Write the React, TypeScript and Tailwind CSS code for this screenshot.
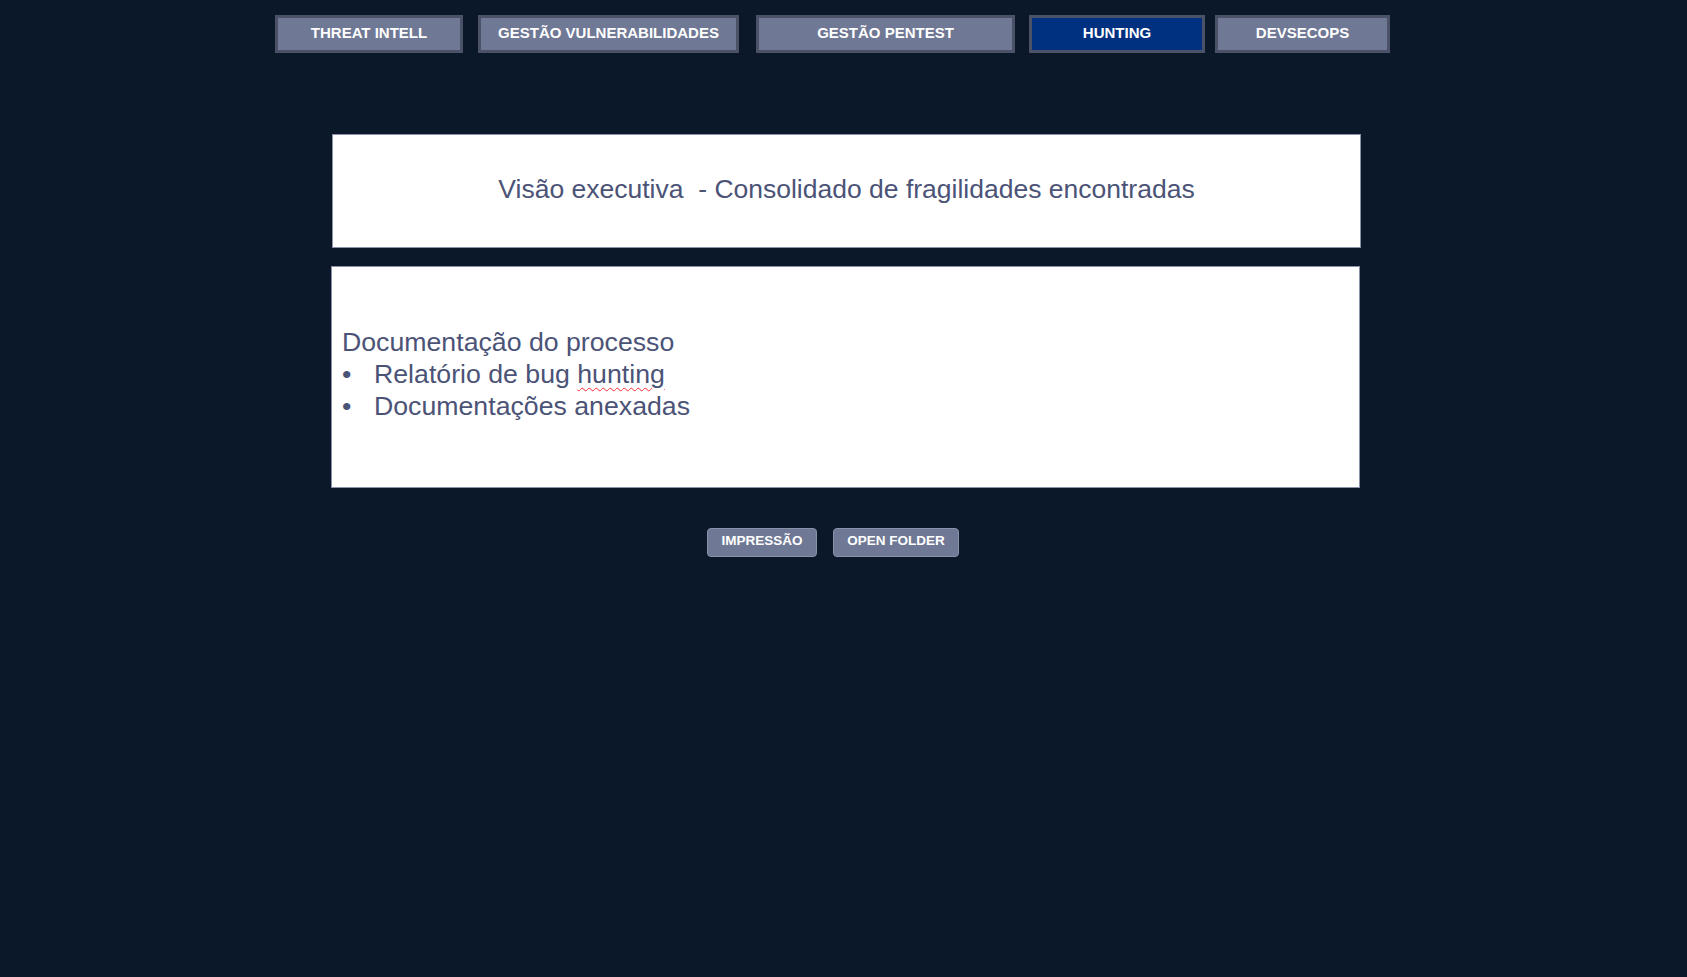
import React from 'react';

const tabs = [
  { label: 'THREAT INTELL', w: 'w-[188px]', ml: 'ml-0', active: false },
  { label: 'GESTÃO VULNERABILIDADES', w: 'w-[261px]', ml: 'ml-[15px]', active: false },
  { label: 'GESTÃO PENTEST', w: 'w-[259px]', ml: 'ml-[17px]', active: false },
  { label: 'HUNTING', w: 'w-[176px]', ml: 'ml-[14px]', active: true },
  { label: 'DEVSECOPS', w: 'w-[175px]', ml: 'ml-[10px]', active: false },
];

export default function App() {
  return (
    <div className="min-h-[977px] w-full bg-[#0a1829] font-['Liberation_Sans',Arial,sans-serif]">
      {/* top nav */}
      <nav className="flex pl-[275px] pt-[15px]">
        {tabs.map((t) => (
          <button
            key={t.label}
            className={`${t.w} ${t.ml} h-[38px] border-[3px] border-[#4b5267] pb-[2px] text-[15px] font-bold text-white ${
              t.active ? 'bg-[#003080]' : 'bg-[#6f7894]'
            }`}
          >
            {t.label}
          </button>
        ))}
      </nav>

      {/* title card */}
      <section className="ml-[332px] mt-[81px] flex h-[114px] w-[1029px] items-center justify-center border border-[#8a91a8] bg-white">
        <h1 className="whitespace-pre pb-[3px] text-[26.5px] text-[#4b5377]">
          Visão executiva  - Consolidado de fragilidades encontradas
        </h1>
      </section>

      {/* content card */}
      <section className="ml-[331px] mt-[18px] h-[222px] w-[1029px] border border-[#8a91a8] bg-white pl-[10px] pt-[59px] text-[26.7px] leading-[32px] text-[#4b5377]">
        <p>Documentação do processo</p>
        <ul>
          <li className="flex">
            <span className="w-[32px]">•</span>
            <span>
              Relatório de bug{' '}
              <span className="underline decoration-wavy decoration-red-500 decoration-1 underline-offset-4">hunting</span>
            </span>
          </li>
          <li className="flex">
            <span className="w-[32px]">•</span>
            <span>Documentações anexadas</span>
          </li>
        </ul>
      </section>

      {/* actions */}
      <div className="ml-[707px] mt-[40px] flex gap-[16px]">
        <button className="h-[29px] w-[110px] rounded-[4px] border border-[#8a91a8] bg-[#6f7894] pb-[2px] text-[13.5px] font-bold text-white">
          IMPRESSÃO
        </button>
        <button className="h-[29px] w-[126px] rounded-[4px] border border-[#8a91a8] bg-[#6f7894] pb-[2px] text-[13.5px] font-bold text-white">
          OPEN FOLDER
        </button>
      </div>
    </div>
  );
}
